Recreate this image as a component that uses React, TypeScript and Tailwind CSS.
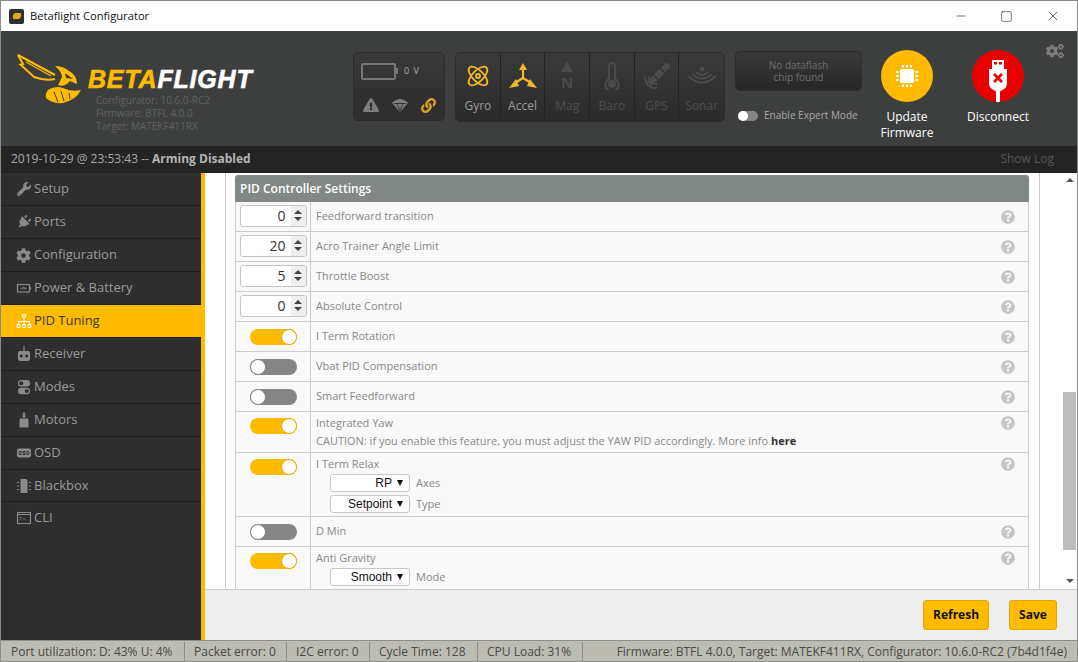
import { FaWrench, FaPlug, FaCog, FaCogs, FaExclamationTriangle, FaLink, FaQuestionCircle } from "react-icons/fa";
import { Minus, Square, X } from "lucide-react";

function PowerIcon() {
  return (
    <svg width="16" height="16" viewBox="0 0 16 16" fill="none" stroke="#8a8a8a">
      <rect x="1.5" y="4.5" width="12" height="7.5" strokeWidth="1.2" />
      <path d="M14.5 7v2.5" strokeWidth="1.2" />
      <path d="M4 8.2h3l1-1.4v2.6l1-1.2h2" strokeWidth="0.8" />
    </svg>
  );
}

function PidIcon() {
  return (
    <svg width="16" height="16" viewBox="0 0 16 16" fill="none" stroke="#fff" strokeWidth="1.1">
      <circle cx="8" cy="3" r="1.6" />
      <circle cx="2.5" cy="13" r="1.6" />
      <circle cx="8" cy="13" r="1.6" />
      <circle cx="13.5" cy="13" r="1.6" />
      <path d="M8 4.6v6.8M2.5 11.4V8.5h11v2.9" />
    </svg>
  );
}

function ReceiverIcon() {
  return (
    <svg width="16" height="16" viewBox="0 0 16 16" fill="#8a8a8a">
      <rect x="7.4" y="0" width="1.2" height="6" />
      <rect x="2" y="5" width="12" height="10" rx="2" />
      <circle cx="5.3" cy="10" r="1.6" fill="#2e2e2e" />
      <circle cx="10.7" cy="10" r="1.6" fill="#2e2e2e" />
    </svg>
  );
}

function ModesIcon() {
  return (
    <svg width="16" height="16" viewBox="0 0 16 16" fill="#8a8a8a">
      <rect x="2" y="1" width="12" height="6.4" rx="3.2" />
      <circle cx="5.2" cy="4.2" r="2" fill="#2e2e2e" />
      <rect x="2" y="8.8" width="12" height="6.4" rx="3.2" />
      <circle cx="10.8" cy="12" r="2" fill="#2e2e2e" />
    </svg>
  );
}

function MotorsIcon() {
  return (
    <svg width="16" height="16" viewBox="0 0 16 16" fill="#8a8a8a">
      <path d="M7 0.5h2l0.5 5H6.5z" />
      <path d="M4 6.5h8l0.5 1.5v7.5h-9V8z" />
    </svg>
  );
}

function OsdIcon() {
  return (
    <svg width="16" height="16" viewBox="0 0 16 16">
      <rect x="1" y="3.5" width="14" height="9" rx="2" fill="#8a8a8a" />
      <path d="M3.2 6.5h2v3h-2zM10.8 6.5h1.2q1.2 0 1.2 1.5t-1.2 1.5h-1.2z M9.6 6.5H7v1.5h2.2v1.500H6.600" fill="none" stroke="#2e2e2e" strokeWidth="0.9" />
    </svg>
  );
}

function BlackboxIcon() {
  return (
    <svg width="16" height="16" viewBox="0 0 16 16" fill="#8a8a8a">
      <path d="M4.5 1h5.5l1.5 1.5V15h-7z" />
      <path d="M1 4h2v1H1zM1 7.5h2v1H1zM1 11h2v1H1zM13 4h2v1h-2zM13 7.5h2v1h-2zM13 11h2v1h-2z" />
    </svg>
  );
}

function CliIcon() {
  return (
    <svg width="16" height="16" viewBox="0 0 16 16" fill="none" stroke="#8a8a8a">
      <rect x="1.5" y="2.5" width="13" height="11" strokeWidth="1.1" />
      <path d="M1.5 4.5h13" strokeWidth="1" />
      <path d="M3.5 7l2 1.3-2 1.3M7 9h2.5" strokeWidth="0.8" />
    </svg>
  );
}

function WaspLogo() {
  return (
    <svg width="65" height="50" viewBox="0 0 65 50" className="shrink-0" fill="none">
      {/* wings */}
      <path d="M1 1L38 21" stroke="#ffbb00" strokeWidth="2" />
      <path d="M1 1L6 10L3.500 10.500L17 23Q28 27 38 25" stroke="#ffbb00" strokeWidth="2" />
      <path d="M9 8L34 22" stroke="#ffbb00" strokeWidth="1.200" />
      {/* head */}
      <path d="M38 12Q46 12 52 17Q60 21 60 30L53 27L50 30Q45 33 41 31L45 23Q45 18 38 12z" fill="#ffbb00" />
      <path d="M48 19L56 25L49 24z" fill="#3d3f3e" />
      {/* abdomen */}
      <path d="M31 36Q38 31 46 34Q54 38 64 36Q59 46 46 49Q35 50 29 44Q28 40 31 36z" fill="#ffbb00" />
      <path d="M37 38L41 48M44 37L47 47M52 39L53 45" stroke="#3d3f3e" strokeWidth="1" />
    </svg>
  );
}

const sensorOn = "#f2b62c";
const sensorOff = "#4a4c4b";

function Sensor({ label, on, children }: { label: string; on?: boolean; children: React.ReactNode }) {
  return (
    <div className="w-[45px] h-full flex flex-col items-center border-r border-[#232323] last:border-r-0 bg-gradient-to-b from-[#3a3a3a] to-[#2b2b2b]">
      <div className="h-[45px] flex items-center justify-center">{children}</div>
      <span className={`text-[12px] leading-[16px] ${on ? "text-[#9a9a9a]" : "text-[#4c4e4d]"}`}>{label}</span>
    </div>
  );
}

const menu: [string, React.ReactNode, boolean?][] = [
  ["Setup", <FaWrench size={14} color="#8a8a8a" />],
  ["Ports", <FaPlug size={14} color="#8a8a8a" className="rotate-45" />],
  ["Configuration", <FaCog size={15} color="#8a8a8a" />],
  ["Power & Battery", <PowerIcon />],
  ["PID Tuning", <PidIcon />, true],
  ["Receiver", <ReceiverIcon />],
  ["Modes", <ModesIcon />],
  ["Motors", <MotorsIcon />],
  ["OSD", <OsdIcon />],
  ["Blackbox", <BlackboxIcon />],
  ["CLI", <CliIcon />],
];

function Toggle({ on }: { on?: boolean }) {
  return (
    <div className={`w-[47px] h-[16px] rounded-full flex items-center ${on ? "bg-[#ffbb00] justify-end" : "bg-[#858585] justify-start"}`}>
      <div className={`w-[16px] h-[16px] rounded-full bg-white border ${on ? "border-[#e6a800]" : "border-[#858585]"}`} />
    </div>
  );
}

function NumInput({ value }: { value: number }) {
  return (
    <div className="w-[67px] h-[22px] mb-[2px] bg-white border border-[#c4c4c4] rounded-[3px] flex items-stretch overflow-hidden">
      <span className="flex-1 text-right pr-[5px] text-[14px] leading-[20px] text-[#333]">{value}</span>
      <div className="w-[15px] bg-[#efefef] flex flex-col items-center justify-center gap-[3px]">
        <div className="w-0 h-0 border-x-[4px] border-x-transparent border-b-[4px] border-b-[#444]" />
        <div className="w-0 h-0 border-x-[4px] border-x-transparent border-t-[4px] border-t-[#444]" />
      </div>
    </div>
  );
}

function Sel({ value, label }: { value: string; label: string }) {
  return (
    <div className="flex items-center gap-[6px] pl-[14px]">
      <div className="w-[80px] h-[18px] shrink-0 bg-white border border-[#c8c8c8] rounded-[3px] flex items-center justify-end pr-[6px] gap-[5px] text-[12px] text-[#111] font-['Liberation_Sans',sans-serif]">
        <span>{value}</span>
        <div className="w-0 h-0 border-x-[3.5px] border-x-transparent border-t-[6px] border-t-[#111]" />
      </div>
      <span>{label}</span>
    </div>
  );
}

function Row({ left, top, h, children }: { left: React.ReactNode; top?: boolean; h: string; children: React.ReactNode }) {
  return (
    <div className={`flex border-b border-[#ccc] shrink-0 ${h}`}>
      <div className={`w-[75px] shrink-0 border-r border-[#ccc] flex justify-center ${top ? "items-start pt-[6px]" : "items-center"}`}>{left}</div>
      <div className={`flex-1 pl-[5px] text-[11px] text-[#888] flex flex-col ${top ? "justify-start pt-[3px]" : "justify-center"}`}>{children}</div>
      <div className={`w-[27px] shrink-0 flex ${top ? "pt-[4px]" : "items-center"}`}>
        <FaQuestionCircle size={14} color="#c4c4c4" />
      </div>
    </div>
  );
}

export default function App() {
  return (
    <div className="w-[1078px] h-[662px] overflow-hidden flex flex-col bg-white border-x border-t border-[#8a8a8a] font-['Open_Sans',sans-serif]">
      {/* title bar */}
      <div className="h-[30px] shrink-0 flex items-center bg-white">
        <div className="ml-[8px] w-[15px] h-[15px] rounded-[2px] bg-[#2f2f2f] flex items-center justify-center">
          <div className="w-[8px] h-[6px] bg-[#e0ab1d] rounded-[2px] -skew-x-12" />
        </div>
        <span className="ml-[6px] text-[11.200px] text-[#111]">Betaflight Configurator</span>
        <div className="ml-auto flex items-center text-[#111]">
          <Minus size={14} strokeWidth={1} className="mr-[32px]" />
          <Square size={13} strokeWidth={1} className="mr-[32px]" />
          <X size={16} strokeWidth={1} className="mr-[16px]" />
        </div>
      </div>

      {/* header */}
      <div className="h-[115px] shrink-0 bg-[#3d3f3e] flex">
        <div className="w-[352px] shrink-0 flex pl-[16px] pt-[23px]">
          <WaspLogo />
          <div className="ml-[6px] pt-[12px]">
            <div className="h-[28px] text-[25px] leading-[26px] font-bold italic font-['Liberation_Sans',sans-serif] tracking-[0.8px] [-webkit-text-stroke:0.6px_currentColor]">
              <span className="text-[#ffbb00]">BETA</span>
              <span className="text-white">FLIGHT</span>
            </div>
            <div className="pl-[8px] text-[10px] leading-[13px] text-[#5f6160]">
              <div>Configurator: 10.6.0-RC2</div>
              <div>Firmware: BTFL 4.0.0</div>
              <div>Target: MATEKF411RX</div>
            </div>
          </div>
        </div>

        <div className="mt-[21px] w-[92px] h-[69px] shrink-0 rounded-[5px] border border-[#2c2c2c] bg-[#2f2f2f] overflow-hidden">
          <div className="h-[36px] flex items-center pl-[7px] bg-gradient-to-b from-[#393939] to-[#323232]">
            <div className="w-[35px] h-[17px] border-2 border-[#777] rounded-[2px]" />
            <div className="w-[2px] h-[6px] bg-[#777]" />
            <span className="ml-[6px] text-[9px] text-[#aaa] tracking-[1px]">0 V</span>
          </div>
          <div className="h-[32px] flex items-center pl-[9px] gap-[13px]">
            <FaExclamationTriangle size={16} color="#7d7d7d" />
            <svg width="16" height="14" viewBox="0 0 16 14" fill="#7d7d7d">
              <path d="M0 5Q8-3 16 5L8 14z" />
              <path d="M2 5.500h12M5 5.500L8 13L11 5.500" stroke="#2f2f2f" strokeWidth="0.9" fill="none" />
            </svg>
            <FaLink size={15} color="#d9a420" />
          </div>
        </div>

        <div className="ml-[10px] mt-[21px] w-[270px] h-[70px] shrink-0 flex rounded-[5px] border border-[#2c2c2c] overflow-hidden">
          <Sensor label="Gyro" on>
            <svg width="26" height="26" viewBox="0 0 26 26" fill="none" stroke={sensorOn} strokeWidth="1.8">
              <ellipse cx="13" cy="13" rx="12" ry="5.500" transform="rotate(45 13 13)" />
              <ellipse cx="13" cy="13" rx="12" ry="5.500" transform="rotate(-45 13 13)" />
              <circle cx="13" cy="13" r="2" />
            </svg>
          </Sensor>
          <Sensor label="Accel" on>
            <svg width="28" height="26" viewBox="0 0 28 26" fill={sensorOn}>
              <path d="M14 15V6M14 15L6 20M14 15L22 20" stroke={sensorOn} strokeWidth="2.200" fill="none" />
              <path d="M14 0L18 7H10z" />
              <path d="M0 25L7 16L10 23z" />
              <path d="M28 25L21 16L18 23z" />
            </svg>
          </Sensor>
          <Sensor label="Mag">
            <div className="flex flex-col items-center">
              <div className="w-0 h-0 border-x-[6px] border-x-transparent border-b-[11px] border-b-[#4a4c4b]" />
              <span className="text-[15px] leading-[17px] font-bold mt-[2px] text-[#4a4c4b]">N</span>
            </div>
          </Sensor>
          <Sensor label="Baro">
            <svg width="16" height="28" viewBox="0 0 16 28" fill="none" stroke={sensorOff} strokeWidth="2">
              <path d="M5 17V4a3 3 0 016 0v13a6.500 6.500 0 11-6 0z" />
              <circle cx="8" cy="22" r="3" fill={sensorOff} />
            </svg>
          </Sensor>
          <Sensor label="GPS">
            <svg width="26" height="26" viewBox="0 0 26 26" fill={sensorOff}>
              <g transform="rotate(45 15 11)">
                <rect x="11.500" y="7" width="7" height="8" rx="1" />
                <rect x="12" y="-3" width="6" height="8.500" />
                <rect x="12" y="16.500" width="6" height="8.500" />
              </g>
              <path d="M9 13q0 4 4 4M5 13q0 8 8 8M1 13q0 12 12 12" fill="none" stroke={sensorOff} strokeWidth="1.800" />
            </svg>
          </Sensor>
          <Sensor label="Sonar">
            <svg width="30" height="22" viewBox="0 0 30 22" fill="none" stroke={sensorOff} strokeWidth="2">
              <circle cx="15" cy="4" r="2.500" fill={sensorOff} stroke="none" />
              <path d="M9 7q6 6 12 0M5 9q10 9 20 0M1 11q14 13 28 0" />
            </svg>
          </Sensor>
        </div>

        <div className="ml-[10px] mt-[20px] w-[127px] shrink-0">
          <div className="h-[40px] rounded-[5px] border border-[#2c2c2c] bg-gradient-to-b from-[#3a3a3a] to-[#272727] flex items-center justify-center text-center text-[10px] leading-[12px] text-[#6d6f6e]">
            <div>No dataflash<br />chip found</div>
          </div>
          <div className="mt-[17px] ml-[3px] flex items-center gap-[6px] whitespace-nowrap">
            <div className="w-[20px] h-[10px] rounded-full bg-[#858585] flex items-center">
              <div className="w-[10px] h-[10px] rounded-full bg-white" />
            </div>
            <span className="text-[10px] text-[#aaa]">Enable Expert Mode</span>
          </div>
        </div>

        <div className="ml-[15px] w-[60px] shrink-0 flex flex-col items-center pt-[19px]">
          <div className="w-[52px] h-[52px] shrink-0 rounded-full bg-[#ffbb00] flex items-center justify-center">
            <svg width="26" height="26" viewBox="0 0 26 26" fill="#fff">
              <rect x="6" y="6" width="14" height="14" rx="1.500" />
              <path d="M8 2h2v2.500H8zM12 2h2v2.500h-2zM16 2h2v2.500h-2zM8 21.500h2V24H8zM12 21.500h2V24h-2zM16 21.500h2V24h-2zM2 8h2.500v2H2zM2 12h2.500v2H2zM2 16h2.500v2H2zM21.500 8H24v2h-2.500zM21.500 12H24v2h-2.500zM21.500 16H24v2h-2.500z" />
            </svg>
          </div>
          <div className="mt-[7px] text-center text-[12px] leading-[16px] text-white">Update<br />Firmware</div>
        </div>

        <div className="ml-[31px] w-[60px] shrink-0 flex flex-col items-center pt-[19px]">
          <div className="w-[52px] h-[52px] shrink-0 rounded-full bg-[#e60000] flex items-center justify-center overflow-hidden">
            <svg width="24" height="52" viewBox="0 0 24 52" fill="#fff">
              <path d="M6 10h12v9h3v15q0 3-3 5l-4 2.500V52h-4V41.500L6 39q-3-2-3-5V19h3z" />
              <rect x="8" y="12" width="3" height="2.500" fill="#e60000" />
              <rect x="13" y="12" width="3" height="2.500" fill="#e60000" />
              <path d="M8 24l8 8M16 24l-8 8" stroke="#e60000" strokeWidth="2.600" />
            </svg>
          </div>
          <div className="mt-[7px] text-[12px] leading-[16px] text-white">Disconnect</div>
        </div>

        <FaCogs size={18} color="#7d7d7d" className="ml-[18px] mt-[11px] shrink-0" />
      </div>

      {/* log bar */}
      <div className="h-[27px] shrink-0 bg-[#242424] flex items-center pl-[10px] pr-[23px] pb-[2px] text-[12px]">
        <span className="text-[#a8a8a8]">2019-10-29 @ 23:53:43 -- <b className="font-bold text-[#b4b4b4]">Arming Disabled</b></span>
        <span className="ml-auto text-[#555]">Show Log</span>
      </div>

      {/* main */}
      <div className="flex-1 min-h-0 flex">
        <div className="w-[204px] shrink-0 bg-[#2e2e2e] border-r-4 border-[#ffbb00]">
          {menu.map(([label, icon, active], i) => (
            <div
              key={label}
              className={`flex items-center pl-[14px] gap-[2px] border-b ${i === 9 ? "h-[32px]" : "h-[33px]"} ${i === 10 ? "border-transparent" : "border-[#1e1e1e]"} ${active ? "bg-[#ffbb00] text-[#3a3a3a]" : "text-[#9a9a9a]"}`}
            >
              <span className="w-[17px] flex justify-center shrink-0">{icon}</span>
              <span className="text-[13px]">{label}</span>
            </div>
          ))}
        </div>

        <div className="flex-1 min-w-0 flex flex-col bg-white">
          <div className="flex-1 min-h-0 flex">
            <div className="flex-1 min-w-0 overflow-hidden pl-[20px] pr-[22px]">
              <div className="h-full border-x border-[#ccc] pl-[9px] pr-[10px] pt-[2px] overflow-hidden">
                <div className="h-[27px] rounded-t-[3px] bg-[#828885] flex items-center pl-[5px] text-[12px] font-semibold text-white">
                  PID Controller Settings
                </div>
                <div className="border-x border-[#ccc] bg-[#f9f9f9] flex flex-col">
                  <Row h="h-[30px]" left={<NumInput value={0} />}>Feedforward transition</Row>
                  <Row h="h-[30px]" left={<NumInput value={20} />}>Acro Trainer Angle Limit</Row>
                  <Row h="h-[30px]" left={<NumInput value={5} />}>Throttle Boost</Row>
                  <Row h="h-[30px]" left={<NumInput value={0} />}>Absolute Control</Row>
                  <Row h="h-[30px]" left={<Toggle on />}>I Term Rotation</Row>
                  <Row h="h-[30px]" left={<Toggle />}>Vbat PID Compensation</Row>
                  <Row h="h-[30px]" left={<Toggle />}>Smart Feedforward</Row>
                  <Row h="h-[41px]" top left={<Toggle on />}>
                    <div className="leading-[16px]">Integrated Yaw</div>
                    <div className="leading-[19px]">CAUTION: if you enable this feature, you must adjust the YAW PID accordingly. More info <b className="text-[#333]">here</b></div>
                  </Row>
                  <Row h="h-[64px]" top left={<Toggle on />}>
                    <div className="leading-[16px] mb-[2px]">I Term Relax</div>
                    <Sel value="RP" label="Axes" />
                    <div className="h-[3px]" />
                    <Sel value="Setpoint" label="Type" />
                  </Row>
                  <Row h="h-[30px]" left={<Toggle />}>D Min</Row>
                  <Row h="h-[80px]" top left={<Toggle on />}>
                    <div className="leading-[16px] mb-[2px]">Anti Gravity</div>
                    <Sel value="Smooth" label="Mode" />
                    <div className="h-[3px]" />
                    <Sel value="" label="" />
                  </Row>
                </div>
              </div>
            </div>
            <div className="w-[15px] shrink-0 bg-white flex flex-col items-center">
              <div className="mt-[5px] w-0 h-0 border-x-[4px] border-x-transparent border-b-[4px] border-b-[#555]" />
              <div className="mt-[210px] w-[13px] h-[158px] bg-[#bdbdbd]" />
              <div className="mt-auto mb-[6px] w-0 h-0 border-x-[4px] border-x-transparent border-t-[4px] border-t-[#555]" />
            </div>
          </div>
          <div className="h-[51px] shrink-0 bg-[#efefef] border-t border-[#ccc] flex items-start justify-end pt-[10px] pr-[20px] gap-[20px] text-[12px] font-bold text-[#111]">
            <div className="w-[66px] h-[30px] rounded-[3px] bg-[#ffbb00] border border-[#e2a600] flex items-center justify-center">Refresh</div>
            <div className="w-[48px] h-[30px] rounded-[3px] bg-[#ffbb00] border border-[#e2a600] flex items-center justify-center">Save</div>
          </div>
        </div>
      </div>

      {/* status bar */}
      <div className="h-[22px] shrink-0 bg-[#bcbcb3] border-y border-[#8e8e88] flex items-center pt-[1px] text-[12px] text-[#4a4a46] whitespace-nowrap">
        <div className="w-[184px] pl-[10px] border-r border-[#8e8e88] leading-[20px]">Port utilization: D: 43% U: 4%</div>
        <div className="w-[102px] pl-[9px] border-r border-[#8e8e88] leading-[20px]">Packet error: 0</div>
        <div className="w-[83px] pl-[9px] border-r border-[#8e8e88] leading-[20px]">I2C error: 0</div>
        <div className="w-[108px] pl-[9px] border-r border-[#8e8e88] leading-[20px]">Cycle Time: 128</div>
        <div className="w-[105px] pl-[9px] border-r border-[#8e8e88] leading-[20px]">CPU Load: 31%</div>
        <div className="ml-auto pr-[10px] leading-[20px]">Firmware: BTFL 4.0.0, Target: MATEKF411RX, Configurator: 10.6.0-RC2 (7b4d1f4e)</div>
      </div>
    </div>
  );
}
